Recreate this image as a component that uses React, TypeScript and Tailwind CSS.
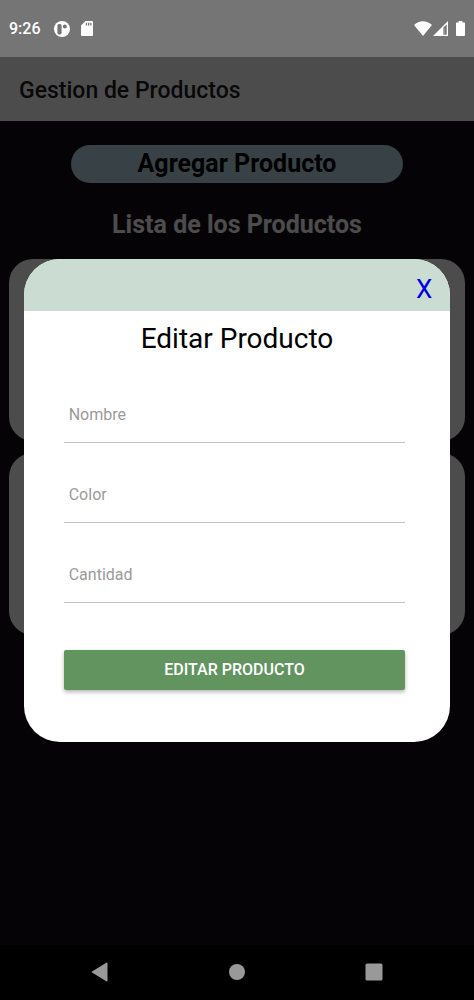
import { useState } from "react";

const fields = [
  { name: "nombre", label: "Nombre" },
  { name: "color", label: "Color" },
  { name: "cantidad", label: "Cantidad" },
];

const productos = [{ id: 1 }, { id: 2 }];

function StatusBar() {
  return (
    <div className="flex h-[57px] items-center justify-between bg-[#757575] px-[9px] text-white">
      <div className="flex items-center">
        <span className="text-base font-medium">9:26</span>
        <svg className="ml-[13px] size-4" viewBox="0 0 16 16">
          <circle cx="8" cy="8" r="8" fill="currentColor" />
          <rect x="3.4" y="3" width="4.2" height="10.4" rx="1.6" fill="#757575" />
          <circle cx="10.8" cy="5.6" r="2" fill="#757575" />
        </svg>
        <svg className="ml-[11px] h-[15px] w-3" viewBox="0 0 12 15">
          <path
            d="M4.6 0H11a1 1 0 0 1 1 1v13a1 1 0 0 1-1 1H1a1 1 0 0 1-1-1V4.6z"
            fill="currentColor"
          />
          <path d="M4.8 1.8h1.3v2.8H4.8zM7 1.8h1.3v2.8H7zM9.2 1.8h1.3v2.8H9.2z" fill="#757575" />
        </svg>
      </div>
      <div className="flex items-center">
        <svg className="h-[15px] w-[18px]" viewBox="0 0 18 15">
          <path d="M0 4C5-1.1 13-1.1 18 4L9 15z" fill="currentColor" />
        </svg>
        <svg className="ml-px h-[15px] w-[15px]" viewBox="0 0 15 15">
          <path d="M15 0v15H0zM13.7 3.4L10.4 6.6v7.1h3.3z" fill="currentColor" fillRule="evenodd" />
          <path d="M11.2 7h1v6h-1z" fill="currentColor" opacity="0.25" />
        </svg>
        <svg className="ml-2 h-[15px] w-[9px]" viewBox="0 0 9 15">
          <path
            d="M2.6 0h3.8v1.4h1.8a.8.8 0 0 1 .8.8v12a.8.8 0 0 1-.8.8H.8a.8.8 0 0 1-.8-.8v-12a.8.8 0 0 1 .8-.8h1.8z"
            fill="currentColor"
          />
        </svg>
      </div>
    </div>
  );
}

function EditModal({ onClose }: { onClose: () => void }) {
  return (
    <div className="absolute inset-0 flex items-center justify-center bg-black/70 pb-0.5">
      <div
        role="dialog"
        aria-labelledby="editar-titulo"
        className="w-9/10 overflow-hidden rounded-[36px] bg-white text-black"
      >
        <div className="flex h-[52px] items-center justify-end bg-[#cbddd2] pt-2 pr-[18px]">
          <button
            type="button"
            aria-label="Cerrar"
            onClick={onClose}
            className="text-[26px] leading-8 text-[#0000e6]"
          >
            X
          </button>
        </div>
        <h2 id="editar-titulo" className="pt-2 text-center text-[28px] leading-10">
          Editar Producto
        </h2>
        <form
          className="flex flex-col pt-7 pr-[45px] pb-[52px] pl-10"
          onSubmit={(e) => e.preventDefault()}
        >
          {fields.map((f) => (
            <input
              key={f.name}
              name={f.name}
              aria-label={f.label}
              placeholder={f.label}
              className="mb-6 h-14 w-full border-b border-[#c4c4c4] px-[5px] text-base outline-none placeholder:text-[#9a9a9a]"
            />
          ))}
          <button
            type="submit"
            className="mt-[23px] h-10 rounded-xs bg-[#61945f] pt-px text-base font-medium text-white uppercase shadow-[0_2px_4px_rgba(0,0,0,0.3)]"
          >
            Editar Producto
          </button>
        </form>
      </div>
    </div>
  );
}

function NavigationBar() {
  return (
    <nav className="flex h-[55px] items-center justify-between bg-black px-[91px] pb-px text-[#999999]">
      <button type="button" aria-label="Atrás">
        <svg className="h-5 w-[17px]" viewBox="0 0 17 20">
          <path d="M16.5 1v18a.5.5 0 0 1-.8.4L1 10.6a.7.7 0 0 1 0-1.2L15.7.6a.5.5 0 0 1 .8.4z" fill="currentColor" />
        </svg>
      </button>
      <button type="button" aria-label="Inicio">
        <svg className="size-4" viewBox="0 0 16 16">
          <circle cx="8" cy="8" r="8" fill="currentColor" />
        </svg>
      </button>
      <button type="button" aria-label="Recientes">
        <svg className="size-[18px]" viewBox="0 0 18 18">
          <rect x="0.5" y="0.5" width="17" height="17" rx="1.5" fill="currentColor" />
        </svg>
      </button>
    </nav>
  );
}

export default function App() {
  const [open, setOpen] = useState(true);

  return (
    <div className="flex min-h-screen flex-col font-[Roboto,sans-serif]">
      <StatusBar />
      <div className="relative flex flex-1 flex-col bg-[#140d14]">
        <header className="flex h-16 items-center bg-white px-[19px] pt-1">
          <h1 className="text-[23px] leading-8 font-medium text-[#1c1c1e]">
            Gestion de Productos
          </h1>
        </header>
        <main className="flex flex-col items-center px-[9px] pt-6">
          <button
            type="button"
            onClick={() => setOpen(true)}
            className="h-[38px] w-[73%] rounded-full bg-[#bbddea] text-[25px] leading-9 font-bold text-black"
          >
            Agregar Producto
          </button>
          <h2 className="mt-6 text-[25px] leading-9 font-bold text-white">
            Lista de los Productos
          </h2>
          <ul className="mt-4 flex w-full flex-col gap-3">
            {productos.map((p) => (
              <li key={p.id} className="h-[182px] rounded-3xl bg-white" />
            ))}
          </ul>
        </main>
        {open && <EditModal onClose={() => setOpen(false)} />}
      </div>
      <NavigationBar />
    </div>
  );
}
